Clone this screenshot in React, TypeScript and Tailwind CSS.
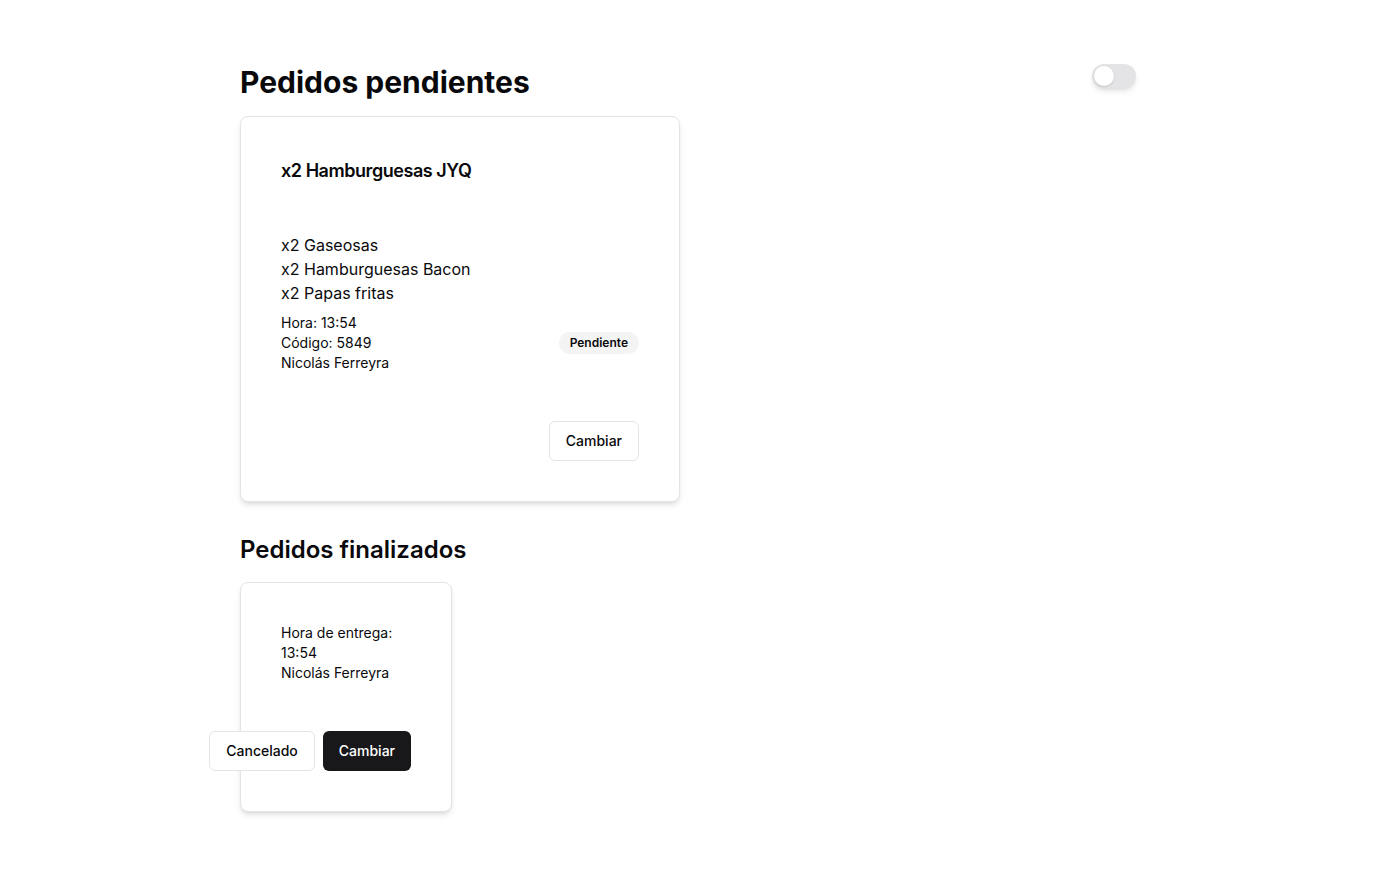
import React from "react";

export default function App() {
  return (
    <div className="min-h-screen bg-white text-[#09090b]" style={{ fontFamily: "Inter, 'Noto Sans', sans-serif" }}>
      <div className="mx-auto max-w-4xl pt-16">
        <div className="flex items-start justify-between">
          <h1 className="text-3xl font-bold">Pedidos pendientes</h1>
          <button className="flex h-6 w-11 items-center rounded-full bg-[#e4e4e7] p-[2px] shadow-md">
            <span className="h-5 w-5 rounded-full bg-white shadow" />
          </button>
        </div>

        <div className="mt-4 w-[440px] rounded-lg border border-[#e4e4e7] bg-white p-10 shadow-md">
          <h3 className="text-lg font-semibold leading-7 tracking-tight">x2 Hamburguesas JYQ</h3>
          <ul className="mt-12 text-base leading-6">
            <li>x2 Gaseosas</li>
            <li>x2 Hamburguesas Bacon</li>
            <li>x2 Papas fritas</li>
          </ul>
          <div className="mt-2 flex items-center justify-between">
            <div className="text-sm leading-5">
              <p>Hora: 13:54</p>
              <p>Código: 5849</p>
              <p>Nicolás Ferreyra</p>
            </div>
            <span className="rounded-full bg-[#f4f4f5] px-[11px] py-[3px] text-xs font-semibold">Pendiente</span>
          </div>
          <div className="mt-12 flex justify-end">
            <button className="h-10 rounded-md border border-[#e4e4e7] bg-white px-4 text-sm font-medium">Cambiar</button>
          </div>
        </div>

        <h2 className="mt-8 text-2xl font-semibold leading-8">Pedidos finalizados</h2>

        <div className="mt-4 w-[212px] rounded-lg border border-[#e4e4e7] bg-white p-10 shadow-md">
          <div className="text-sm leading-5">
            <p>Hora de entrega:</p>
            <p>13:54</p>
            <p>Nicolás Ferreyra</p>
          </div>
          <div className="mt-12 flex justify-end gap-2">
            <button className="h-10 shrink-0 rounded-md border border-[#e4e4e7] bg-white px-4 text-sm font-medium">Cancelado</button>
            <button className="h-10 shrink-0 rounded-md bg-[#18181b] px-4 text-sm font-medium text-white">Cambiar</button>
          </div>
        </div>
      </div>
    </div>
  );
}
